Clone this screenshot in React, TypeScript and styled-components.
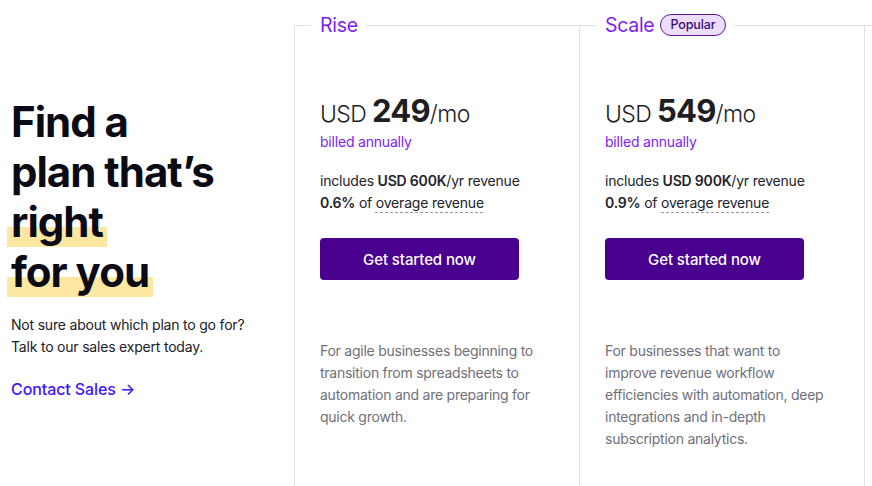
import React from 'react';
import styled, { createGlobalStyle } from 'styled-components';

type Plan = {
  name: string;
  popular?: boolean;
  price: string;
  revenue: string;
  overage: string;
  blurb: string;
};

const plans: Plan[] = [
  {
    name: 'Rise',
    price: '249',
    revenue: 'USD 600K',
    overage: '0.6%',
    blurb: 'For agile businesses beginning to transition from spreadsheets to automation and are preparing for quick growth.',
  },
  {
    name: 'Scale',
    popular: true,
    price: '549',
    revenue: 'USD 900K',
    overage: '0.9%',
    blurb: 'For businesses that want to improve revenue workflow efficiencies with automation, deep integrations and in-depth subscription analytics.',
  },
];

const GlobalStyle = createGlobalStyle`
  html, body {
    margin: 0;
    padding: 0;
    background: #ffffff;
    overflow: hidden;
  }
  body {
    font-family: Inter, "Liberation Sans", sans-serif;
    color: #1c1c24;
  }
`;

const App: React.FC = () => {
  return (
    <>
      <GlobalStyle />
      <Page>
        {/* intro column */}
        <Intro>
          <Headline>
            Find a<br />
            plan that’s<br />
            <Mark>right</Mark>
            <br />
            <Mark>for you</Mark>
          </Headline>
          <Lead>
            Not sure about which plan to go for?
            <br />
            Talk to our sales expert today.
          </Lead>
          <ContactLink href="#">Contact Sales →</ContactLink>
        </Intro>

        {/* plan cards */}
        <Cards>
          {plans.map((plan, i) => (
            <Card key={plan.name} $last={i === plans.length - 1}>
              <CardTitle>
                {plan.name}
                {plan.popular && <Badge>Popular</Badge>}
              </CardTitle>
              <Price>
                USD <Amount>{plan.price}</Amount>/mo
              </Price>
              <Billed>billed annually</Billed>
              <Detail $first>
                includes <b>{plan.revenue}</b>/yr revenue
              </Detail>
              <Detail>
                <b>{plan.overage}</b> of <Dashed>overage revenue</Dashed>
              </Detail>
              <StartButton>Get started now</StartButton>
              <Blurb>{plan.blurb}</Blurb>
            </Card>
          ))}
        </Cards>
      </Page>
    </>
  );
};

const Page = styled.div`
  display: flex;
  width: 872px;
  height: 486px;
  overflow: hidden;
`;

const Intro = styled.div`
  flex: 0 0 294px;
  box-sizing: border-box;
  padding: 97px 0 0 11px;
`;

const Headline = styled.h1`
  margin: 0;
  font-size: 42px;
  line-height: 50px;
  font-weight: 700;
  letter-spacing: -1px;
  color: #0b0b16;
`;

const Mark = styled.span`
  display: inline-block;
  padding: 0 4px;
  margin-left: -4px;
  background: linear-gradient(transparent 60%, #fde8a3 60%);
`;

const Lead = styled.p`
  margin: 17px 0 0;
  font-size: 14px;
  line-height: 22px;
  color: #202028;
  letter-spacing: -0.2px;
`;

const ContactLink = styled.a`
  display: inline-block;
  margin-top: 19px;
  font-size: 16px;
  line-height: 24px;
  font-weight: 500;
  color: #3f16f4;
  text-decoration: none;
  letter-spacing: -0.1px;
`;

const Cards = styled.div`
  flex: 1;
  display: flex;
  margin-top: 25px;
  border-top: 1px solid #e2e2e6;
`;

const Card = styled.div<{ $last?: boolean }>`
  flex: 0 0 ${(p) => (p.$last ? '286px' : '285px')};
  box-sizing: border-box;
  padding: 0 25px;
  border-left: 1px solid #e2e2e6;
  border-right: ${(p) => (p.$last ? '1px solid #e2e2e6' : 'none')};
`;

const CardTitle = styled.div`
  display: flex;
  align-items: center;
  gap: 6px;
  width: fit-content;
  margin: -14px 0 0 -9px;
  padding: 0 8px 0 9px;
  background: #ffffff;
  font-size: 19.5px;
  line-height: 26px;
  color: #7d1ef0;
  letter-spacing: -0.3px;
`;

const Badge = styled.span`
  display: inline-block;
  padding: 0 9px;
  height: 20px;
  line-height: 20px;
  border: 1px solid #5a1a9c;
  border-radius: 11px;
  background: #ecdcfe;
  color: #3a0b72;
  font-size: 12.5px;
  font-weight: 500;
  letter-spacing: -0.1px;
`;

const Price = styled.div`
  margin-top: 55px;
  font-size: 23px;
  font-weight: 300;
  line-height: 36px;
  color: #1d1d22;
  letter-spacing: -0.6px;
`;

const Amount = styled.span`
  font-size: 31px;
  font-weight: 700;
  letter-spacing: -0.8px;
`;

const Billed = styled.div`
  font-size: 14px;
  line-height: 20px;
  color: #7d1ef0;
  letter-spacing: -0.2px;
`;

const Detail = styled.div<{ $first?: boolean }>`
  margin-top: ${(p) => (p.$first ? '18px' : '0')};
  font-size: 14px;
  line-height: 22px;
  color: #222228;
  letter-spacing: -0.2px;

  b {
    font-weight: 600;
  }
`;

const Dashed = styled.span`
  text-decoration: underline dashed #9a9aa2;
  text-underline-offset: 4px;
  text-decoration-thickness: 1px;
`;

const StartButton = styled.button`
  display: block;
  width: 199px;
  height: 42px;
  margin-top: 24px;
  border: none;
  border-radius: 4px;
  background: #4a008e;
  color: #ffffff;
  font-family: inherit;
  font-size: 15px;
  font-weight: 500;
  letter-spacing: -0.1px;
  cursor: pointer;
`;

const Blurb = styled.p`
  margin: 60px 0 0;
  max-width: 222px;
  font-size: 14px;
  line-height: 22px;
  color: #707078;
  letter-spacing: -0.25px;
`;

export default App;
